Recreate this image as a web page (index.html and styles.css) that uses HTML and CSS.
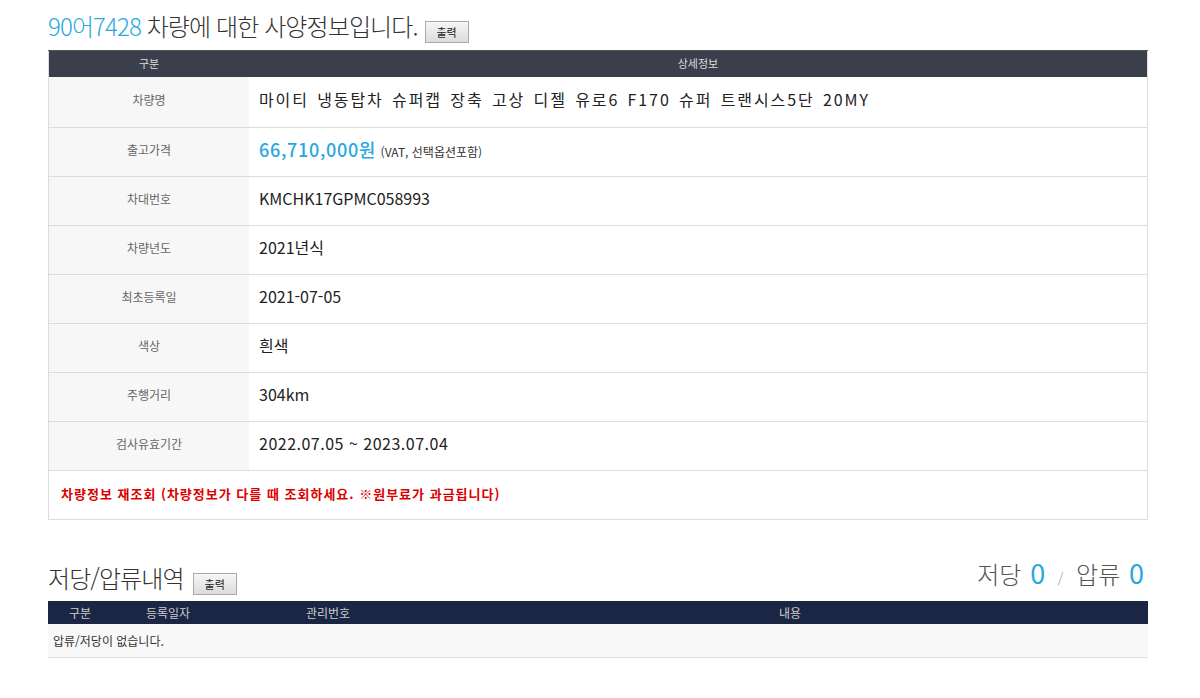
FILE: index.html
```html
<!DOCTYPE html>
<html lang="ko">
<head>
    <meta charset="UTF-8">
    <title>사양정보</title>
    <link rel="stylesheet" href="styles.css">
</head>
<body>
    <div class="wrap">
        <div class="spec_title">
            <h2><span class="blue">90어7428</span> 차량에 대한 사양정보입니다.</h2>
            <button class="btn_print">출력</button>
        </div>

        <table class="spec">
            <thead>
                <tr>
                    <th class="col_label">구분</th>
                    <th>상세정보</th>
                </tr>
            </thead>
            <tbody>
                <tr class="first">
                    <td class="label">차량명</td>
                    <td class="value car_name">마이티 냉동탑차 슈퍼캡 장축 고상 디젤 유로6 F170 슈퍼 트랜시스5단 20MY</td>
                </tr>
                <tr>
                    <td class="label">출고가격</td>
                    <td class="value"><span class="price">66,710,000원</span> <span class="sub">(VAT, 선택옵션포함)</span></td>
                </tr>
                <tr>
                    <td class="label">차대번호</td>
                    <td class="value">KMCHK17GPMC058993</td>
                </tr>
                <tr>
                    <td class="label">차량년도</td>
                    <td class="value">2021년식</td>
                </tr>
                <tr>
                    <td class="label">최초등록일</td>
                    <td class="value">2021-07-05</td>
                </tr>
                <tr>
                    <td class="label">색상</td>
                    <td class="value">흰색</td>
                </tr>
                <tr>
                    <td class="label">주행거리</td>
                    <td class="value">304km</td>
                </tr>
                <tr>
                    <td class="label">검사유효기간</td>
                    <td class="value date">2022.07.05 ~ 2023.07.04</td>
                </tr>
                <tr>
                    <td class="notice" colspan="2">차량정보 재조회 (차량정보가 다를 때 조회하세요. ※원부료가 과금됩니다)</td>
                </tr>
            </tbody>
        </table>

        <div class="lien_title">
            <div class="left">
                <h2>저당/압류내역</h2>
                <button class="btn_print">출력</button>
            </div>
            <div class="count">저당 <span class="num">0</span> <span class="slash">/</span> 압류 <span class="num">0</span></div>
        </div>

        <table class="lien">
            <thead>
                <tr>
                    <th class="c1">구분</th>
                    <th class="c2">등록일자</th>
                    <th class="c3">관리번호</th>
                    <th>내용</th>
                </tr>
            </thead>
            <tbody>
                <tr>
                    <td colspan="4" class="empty">압류/저당이 없습니다.</td>
                </tr>
            </tbody>
        </table>
    </div>
</body>
</html>
```

FILE: styles.css
```css
body{
    margin: 0;
    background: #fff;
    font-family: "Noto Sans CJK KR", "Noto Sans", sans-serif;
    color: #333;
}
.wrap{
    width: 1100px;
    margin-left: 48px;
}
h2{
    margin: 0;
    font-size: 24px;
    font-weight: 300;
    letter-spacing: -0.9px;
    color: #333;
}
.blue{
    color: #29a8e0;
}
.spec_title{
    display: flex;
    align-items: flex-end;
    gap: 7px;
    height: 40px;
    padding-top: 4px;
    margin-bottom: 6px;
}
.spec_title h2{
    line-height: 36px;
}
.spec_title .btn_print{
    margin-bottom: 1px;
}
.btn_print{
    width: 44px;
    height: 22px;
    padding: 0;
    margin-bottom: 2px;
    font-family: inherit;
    font-size: 11px;
    color: #222;
    background: linear-gradient(#f6f6f6, #dcdcdc);
    border: 1px solid #a9a9a9;
}
/* spec table */
table{
    width: 100%;
    border-collapse: collapse;
}
.spec{
    border-left: 1px solid #ddd;
    border-right: 1px solid #ddd;
}
.spec th{
    height: 24px;
    padding: 0 0 2px 0;
    background: #3b3f4c;
    color: #ddd;
    font-size: 11px;
    font-weight: normal;
    border-top: 1px solid #555;
}
.spec .col_label{
    width: 200px;
}
.spec td{
    height: 42px;
    padding: 0 0 6px 0;
    border-bottom: 1px solid #ddd;
}
.spec tr.first td{
    height: 44px;
}
.spec .label{
    background: #f7f7f7;
    text-align: center;
    font-size: 12px;
    color: #666;
}
.spec .value{
    padding-left: 10px;
    font-size: 16px;
    color: #222;
}
.spec .car_name{
    letter-spacing: 1.9px;
    word-spacing: 2px;
}
.spec .date{
    letter-spacing: 0.5px;
}
.price{
    font-size: 18px;
    font-weight: 500;
    color: #29a8e0;
    letter-spacing: 0.7px;
}
.sub{
    font-size: 12px;
    color: #333;
    letter-spacing: 0;
}
.spec .notice{
    height: 44px;
    padding: 0 0 4px 12px;
    font-size: 13px;
    font-weight: bold;
    letter-spacing: 1px;
    color: #dd0000;
}
/* lien */
.lien_title{
    display: flex;
    justify-content: space-between;
    align-items: flex-end;
    margin-top: 37px;
    height: 38px;
    margin-bottom: 6px;
}
.lien_title .left{
    display: flex;
    align-items: flex-end;
    gap: 9px;
}
.lien_title h2{
    line-height: 34px;
}
.lien_title .btn_print{
    margin-bottom: 0;
}
.count{
    font-size: 24px;
    font-weight: 300;
    color: #555;
    line-height: 34px;
    padding-right: 4px;
}
.count .num{
    font-size: 27px;
    font-weight: 400;
    color: #29a8e0;
    margin-left: 2px;
}
.count .slash{
    font-size: 14px;
    color: #999;
    margin: 0 6px;
}
.lien th{
    height: 23px;
    padding: 0;
    background: #1b2644;
    color: #ccc;
    font-size: 12px;
    font-weight: normal;
}
.lien .c1{
    width: 64px;
}
.lien .c2{
    width: 112px;
}
.lien .c3{
    width: 208px;
}
.lien .empty{
    height: 33px;
    padding: 0 0 0 5px;
    background: #f8f8f8;
    font-size: 12px;
    color: #333;
    border-bottom: 1px solid #ddd;
}
```
